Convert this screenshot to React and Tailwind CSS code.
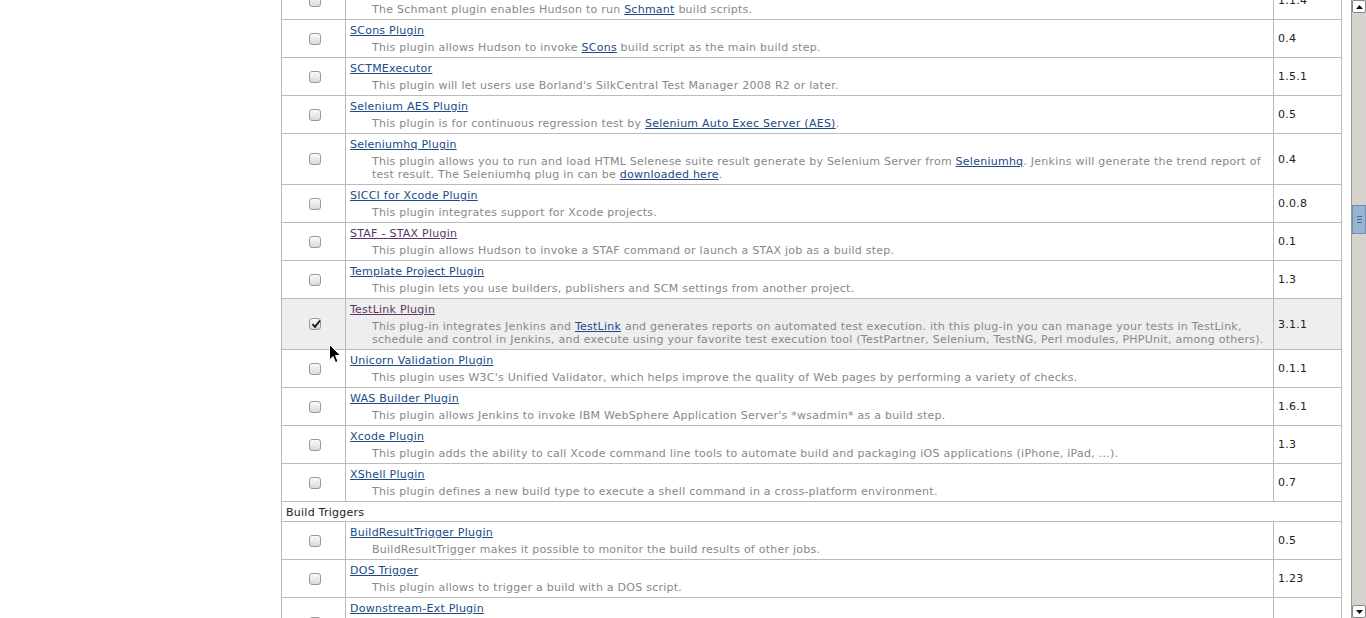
import React from "react";

const L = ({ children, v }) => (
  <a href="#" className={v ? "text-[#5c3566] underline" : "text-[#204a87] underline"}>
    {children}
  </a>
);

const rows = [
  {
    name: "Schmant Plugin",
    desc: (
      <>
        The Schmant plugin enables Hudson to run <L>Schmant</L> build scripts.
      </>
    ),
    ver: "1.1.4",
  },
  {
    name: "SCons Plugin",
    desc: (
      <>
        This plugin allows Hudson to invoke <L>SCons</L> build script as the main build step.
      </>
    ),
    ver: "0.4",
  },
  {
    name: "SCTMExecutor",
    desc: <>This plugin will let users use Borland's SilkCentral Test Manager 2008 R2 or later.</>,
    ver: "1.5.1",
  },
  {
    name: "Selenium AES Plugin",
    desc: (
      <>
        This plugin is for continuous regression test by <L>Selenium Auto Exec Server (AES)</L>.
      </>
    ),
    ver: "0.5",
  },
  {
    name: "Seleniumhq Plugin",
    desc: (
      <>
        This plugin allows you to run and load HTML Selenese suite result generate by Selenium Server from{" "}
        <L>Seleniumhq</L>. Jenkins will generate the trend report of
        <br />
        test result. The Seleniumhq plug in can be <L>downloaded here</L>.
      </>
    ),
    ver: "0.4",
  },
  {
    name: "SICCI for Xcode Plugin",
    desc: <>This plugin integrates support for Xcode projects.</>,
    ver: "0.0.8",
  },
  {
    name: "STAF - STAX Plugin",
    visited: true,
    desc: <>This plugin allows Hudson to invoke a STAF command or launch a STAX job as a build step.</>,
    ver: "0.1",
  },
  {
    name: "Template Project Plugin",
    desc: <>This plugin lets you use builders, publishers and SCM settings from another project.</>,
    ver: "1.3",
  },
  {
    name: "TestLink Plugin",
    visited: true,
    checked: true,
    desc: (
      <>
        This plug-in integrates Jenkins and <L>TestLink</L> and generates reports on automated test execution. ith
        this plug-in you can manage your tests in TestLink,
        <br />
        schedule and control in Jenkins, and execute using your favorite test execution tool (TestPartner, Selenium,
        TestNG, Perl modules, PHPUnit, among others).
      </>
    ),
    ver: "3.1.1",
  },
  {
    name: "Unicorn Validation Plugin",
    desc: (
      <>
        This plugin uses W3C's Unified Validator, which helps improve the quality of Web pages by performing a variety
        of checks.
      </>
    ),
    ver: "0.1.1",
  },
  {
    name: "WAS Builder Plugin",
    desc: <>This plugin allows Jenkins to invoke IBM WebSphere Application Server's *wsadmin* as a build step.</>,
    ver: "1.6.1",
  },
  {
    name: "Xcode Plugin",
    desc: (
      <>
        This plugin adds the ability to call Xcode command line tools to automate build and packaging iOS applications
        (iPhone, iPad, ...).
      </>
    ),
    ver: "1.3",
  },
  {
    name: "XShell Plugin",
    desc: <>This plugin defines a new build type to execute a shell command in a cross-platform environment.</>,
    ver: "0.7",
  },
  { header: "Build Triggers" },
  {
    name: "BuildResultTrigger Plugin",
    desc: <>BuildResultTrigger makes it possible to monitor the build results of other jobs.</>,
    ver: "0.5",
  },
  {
    name: "DOS Trigger",
    desc: <>This plugin allows to trigger a build with a DOS script.</>,
    ver: "1.23",
  },
  {
    name: "Downstream-Ext Plugin",
    desc: (
      <>
        This plugin supports extended configuration for triggering downstream builds: trigger build only if downstream
        job has SCM changes,
        <br />
        trigger build if upstream build result is better/worse than the threshold, and more.
      </>
    ),
    ver: "1.8",
  },
];

function Checkbox({ checked }) {
  return (
    <span className="ml-[3px] relative block w-[12px] h-[12px] rounded-[3px] border border-[#9a9a9a] bg-gradient-to-b from-[#fbfbfb] to-[#d9d9d9]">
      {checked && (
        <svg className="absolute left-[1px] top-[0px]" width="10" height="10" viewBox="0 0 10 10">
          <path d="M1.5 5.2 L4 7.8 L9 1.5" fill="none" stroke="#111" strokeWidth="1.8" />
        </svg>
      )}
    </span>
  );
}

function Row({ r }) {
  if (r.header) {
    return (
      <div className="border-b border-[#bbb] pl-[4px] pt-[4px] pb-[2px] text-[#222]">{r.header}</div>
    );
  }
  return (
    <div className={"flex border-b border-[#bbb] " + (r.checked ? "bg-[#eeeeee]" : "bg-white")}>
      <div className="w-[64px] shrink-0 border-r border-[#bbb] flex items-center justify-center">
        <Checkbox checked={r.checked} />
      </div>
      <div className="flex-1 min-w-0 border-r border-[#bbb] pl-[4px] pr-[4px] pt-[4px] pb-[3px]">
        <div>
          <L v={r.visited}>{r.name}</L>
        </div>
        <div className="pl-[22px] pt-[4px] text-[#888]">{r.desc}</div>
      </div>
      <div className="w-[67px] shrink-0 flex items-center pl-[4px] text-[#222]">{r.ver}</div>
    </div>
  );
}

function Scrollbar() {
  return (
    <div className="w-[15px] h-[618px] shrink-0 flex flex-col bg-[#d6d3ce] border-l border-[#9a9a9a]">
      <div className="h-[13px] bg-white border border-[#888] rounded-[2px] flex items-center justify-center">
        <svg width="7" height="4" viewBox="0 0 7 4">
          <path d="M0 4 L3.5 0 L7 4 Z" fill="#111" />
        </svg>
      </div>
      <div className="h-[192px]" />
      <div className="h-[29px] bg-[#99b4d1] border border-[#6f8fb8] flex flex-col items-center justify-center gap-[2px]">
        <span className="block w-[5px] h-[1px] bg-[#4b6a90]" />
        <span className="block w-[5px] h-[1px] bg-[#4b6a90]" />
        <span className="block w-[5px] h-[1px] bg-[#4b6a90]" />
      </div>
      <div className="flex-1" />
      <div className="h-[13px] bg-white border border-[#888] rounded-[2px] flex items-center justify-center">
        <svg width="7" height="4" viewBox="0 0 7 4">
          <path d="M0 0 L3.5 4 L7 0 Z" fill="#111" />
        </svg>
      </div>
    </div>
  );
}

export default function App() {
  return (
    <div className="relative flex w-[1366px] h-[618px] overflow-hidden bg-white font-['DejaVu_Sans','Verdana',sans-serif] text-[11px] leading-[13px] tracking-[0.25px]">
      <div className="flex-1 pl-[281px] overflow-hidden">
        <div className="w-[1061px] mt-[-18px] border-l border-r border-[#bbb]">
          {rows.map((r, i) => (
            <Row key={i} r={r} />
          ))}
        </div>
      </div>
      <Scrollbar />
      <svg className="absolute left-[329px] top-[344px]" width="13" height="20" viewBox="0 0 13 20">
        <path d="M0.5 0.5 L0.5 16 L4 12.5 L6.5 18.5 L9 17.5 L6.5 11.5 L11.5 11.5 Z" fill="#000" stroke="#fff" strokeWidth="1" />
      </svg>
    </div>
  );
}
